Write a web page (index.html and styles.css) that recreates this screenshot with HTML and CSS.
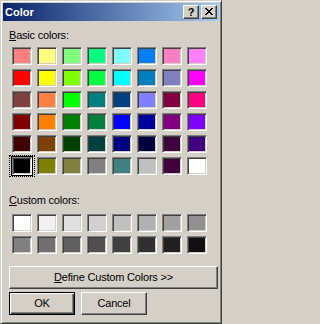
FILE: index.html
```html
<!DOCTYPE html>
<html>
<head>
<meta charset="utf-8">
<link rel="stylesheet" href="styles.css">
</head>
<body>
<div class="window">
  <div class="titlebar">
    <span class="title">Color</span>
    <div class="tbtns">
      <span class="tbtn help">?</span>
      <span class="tbtn close"><svg width="8" height="7" viewBox="0 0 8 7"><path d="M0 0h2v1H0zM6 0h2v1H6zM1 1h2v1H1zM5 1h2v1H5zM2 2h4v1H2zM3 3h2v1H3zM2 4h4v1H2zM1 5h2v1H1zM5 5h2v1H5zM0 6h2v1H0zM6 6h2v1H6z" fill="#000"/></svg></span>
    </div>
  </div>
  <div class="content">
    <div class="label label-basic"><u>B</u>asic colors:</div>
    <div class="grid grid-basic">
      <span class="sw" style="background:#ff8080"></span>
      <span class="sw" style="background:#ffff80"></span>
      <span class="sw" style="background:#80ff80"></span>
      <span class="sw" style="background:#00ff80"></span>
      <span class="sw" style="background:#80ffff"></span>
      <span class="sw" style="background:#0080ff"></span>
      <span class="sw" style="background:#ff80c0"></span>
      <span class="sw" style="background:#ff80ff"></span>

      <span class="sw" style="background:#ff0000"></span>
      <span class="sw" style="background:#ffff00"></span>
      <span class="sw" style="background:#80ff00"></span>
      <span class="sw" style="background:#00ff40"></span>
      <span class="sw" style="background:#00ffff"></span>
      <span class="sw" style="background:#0080c0"></span>
      <span class="sw" style="background:#8080c0"></span>
      <span class="sw" style="background:#ff00ff"></span>

      <span class="sw" style="background:#804040"></span>
      <span class="sw" style="background:#ff8040"></span>
      <span class="sw" style="background:#00ff00"></span>
      <span class="sw" style="background:#008080"></span>
      <span class="sw" style="background:#004080"></span>
      <span class="sw" style="background:#8080ff"></span>
      <span class="sw" style="background:#800040"></span>
      <span class="sw" style="background:#ff0080"></span>

      <span class="sw" style="background:#800000"></span>
      <span class="sw" style="background:#ff8000"></span>
      <span class="sw" style="background:#008000"></span>
      <span class="sw" style="background:#008040"></span>
      <span class="sw" style="background:#0000ff"></span>
      <span class="sw" style="background:#0000a0"></span>
      <span class="sw" style="background:#800080"></span>
      <span class="sw" style="background:#8000ff"></span>

      <span class="sw" style="background:#400000"></span>
      <span class="sw" style="background:#804000"></span>
      <span class="sw" style="background:#004000"></span>
      <span class="sw" style="background:#004040"></span>
      <span class="sw" style="background:#000080"></span>
      <span class="sw" style="background:#000040"></span>
      <span class="sw" style="background:#400040"></span>
      <span class="sw" style="background:#400080"></span>

      <span class="sw selected" style="background:#000000"></span>
      <span class="sw" style="background:#808000"></span>
      <span class="sw" style="background:#808040"></span>
      <span class="sw" style="background:#808080"></span>
      <span class="sw" style="background:#408080"></span>
      <span class="sw" style="background:#c0c0c0"></span>
      <span class="sw" style="background:#400040"></span>
      <span class="sw" style="background:#ffffff"></span>
    </div>
    <div class="label label-custom"><u>C</u>ustom colors:</div>
    <div class="grid grid-custom">
      <span class="sw" style="background:#ffffff"></span>
      <span class="sw" style="background:#f0f0f0"></span>
      <span class="sw" style="background:#e0e0e0"></span>
      <span class="sw" style="background:#d0d0d0"></span>
      <span class="sw" style="background:#c0c0c0"></span>
      <span class="sw" style="background:#b0b0b0"></span>
      <span class="sw" style="background:#a0a0a0"></span>
      <span class="sw" style="background:#909090"></span>
      <span class="sw" style="background:#808080"></span>
      <span class="sw" style="background:#707070"></span>
      <span class="sw" style="background:#606060"></span>
      <span class="sw" style="background:#505050"></span>
      <span class="sw" style="background:#404040"></span>
      <span class="sw" style="background:#303030"></span>
      <span class="sw" style="background:#202020"></span>
      <span class="sw" style="background:#101010"></span>
    </div>
    <div class="btn define"><span><u>D</u>efine Custom Colors &gt;&gt;</span></div>
    <div class="btnrow">
      <div class="btn default"><span>OK</span></div>
      <div class="btn"><span>Cancel</span></div>
    </div>
  </div>
</div>
</body>
</html>
```
FILE: styles.css
```css
html, body {
  margin: 0;
  padding: 0;
  background: #d4d0c8;
}
body {
  font-family: "Liberation Sans", Arial, sans-serif;
  font-size: 11px;
  letter-spacing: -0.2px;
  color: #000;
}
.window {
  width: 222px;
  height: 324px;
  box-sizing: border-box;
  background: #d4d0c8;
  border: 1px solid;
  border-color: #d4d0c8 #404040 #404040 #d4d0c8;
  box-shadow: inset 1px 1px #ffffff, inset -1px -1px #808080;
  padding: 2px;
  display: flex;
  flex-direction: column;
}
.titlebar {
  height: 18px;
  flex: none;
  display: flex;
  align-items: center;
  justify-content: space-between;
  padding-left: 2px;
  padding-right: 2px;
  background: linear-gradient(to right, #0a246a, #a6caf0);
}
.title {
  color: #fff;
  font-weight: bold;
  font-size: 11px;
  letter-spacing: 0;
  line-height: 18px;
}
.tbtns {
  display: flex;
  gap: 2px;
}
.tbtn {
  width: 16px;
  height: 14px;
  box-sizing: border-box;
  background: #d4d0c8;
  border: 1px solid;
  border-color: #ffffff #404040 #404040 #ffffff;
  box-shadow: inset -1px -1px #808080;
  display: flex;
  align-items: center;
  justify-content: center;
}
.help {
  font-weight: bold;
  font-size: 11px;
  line-height: 12px;
  letter-spacing: 0;
  padding-bottom: 1px;
}
.close svg {
  display: block;
  margin-bottom: 1px;
}
.content {
  padding-left: 6px;
  display: flex;
  flex-direction: column;
}
.label {
  line-height: 13px;
  height: 13px;
}
.label-basic {
  margin-top: 8px;
}
.label-custom {
  margin-top: 19px;
}
.grid {
  display: grid;
  grid-template-columns: repeat(8, 20px);
  grid-auto-rows: 18px;
  column-gap: 5px;
  row-gap: 4px;
  margin-left: 3px;
}
.grid-basic {
  margin-top: 5px;
}
.grid-custom {
  margin-top: 7px;
}
.sw {
  display: block;
  box-sizing: border-box;
  border: 1px solid;
  border-color: #808080 #ffffff #ffffff #808080;
  box-shadow: inset 1px 1px #404040, inset -1px -1px #d4d0c8;
  position: relative;
}
.sw.selected {
  outline: 1px solid #000;
}
.sw.selected::after {
  content: "";
  position: absolute;
  left: -4px;
  right: -4px;
  top: -3px;
  bottom: -3px;
  border: 1px dotted #000;
}
.btn {
  box-sizing: border-box;
  height: 23px;
  background: #d4d0c8;
  border: 1px solid;
  border-color: #ffffff #404040 #404040 #ffffff;
  box-shadow: inset -1px -1px #808080;
  display: flex;
  align-items: center;
  justify-content: center;
  line-height: 13px;
}
.define {
  margin-top: 12px;
  width: 209px;
}
.btnrow {
  margin-top: 3px;
  display: flex;
  gap: 6px;
}
.btnrow .btn {
  width: 66px;
}
.btn.default {
  border: 1px solid #000;
  box-shadow: inset 1px 1px #ffffff, inset -1px -1px #404040, inset -2px -2px #808080;
}
```
